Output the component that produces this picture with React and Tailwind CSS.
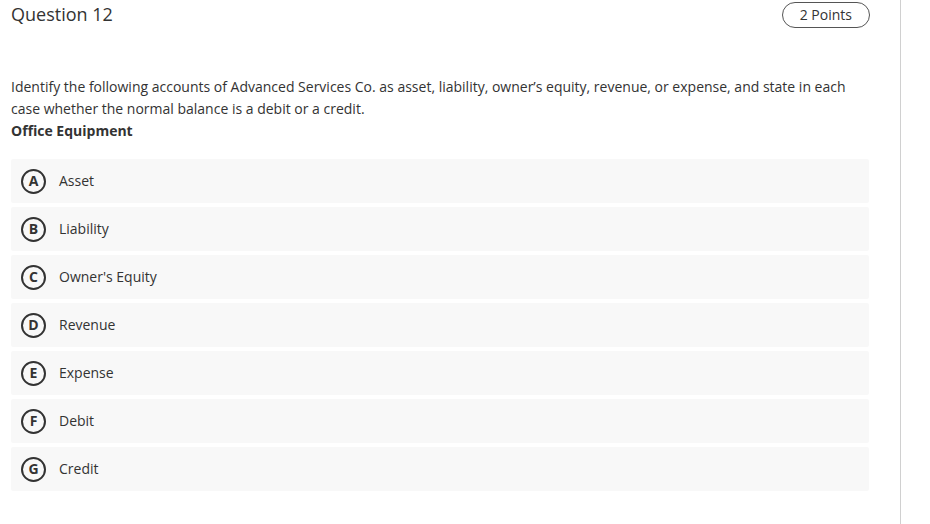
const OPCOES = [
  { letra: 'A', texto: 'Asset' },
  { letra: 'B', texto: 'Liability' },
  { letra: 'C', texto: "Owner's Equity" },
  { letra: 'D', texto: 'Revenue' },
  { letra: 'E', texto: 'Expense' },
  { letra: 'F', texto: 'Debit' },
  { letra: 'G', texto: 'Credit' },
];

export default function App() {
  return (
    <div className="w-[930px] h-[524px] bg-white overflow-hidden" style={{ fontFamily: '"Open Sans", sans-serif' }}>
      <div className="w-[901px] h-full border-r border-[#d0d0d0] pl-[11px] pr-[31px] pt-[1px]">

        {/* ── Cabeçalho ── */}
        <div className="flex items-center justify-between h-[27px]">
          <h2 className="text-[18px] font-medium text-[#333] leading-none mt-[-2px]">Question 12</h2>
          <span className="h-[26px] px-[17px] mr-[-1px] flex items-center rounded-full border border-[#555] text-[14px] font-medium text-[#333]">
            2 Points
          </span>
        </div>

        {/* ── Enunciado ── */}
        <div className="mt-[48px] text-[14px] leading-[22px] text-[#333]">
          <p>
            Identify the following accounts of Advanced Services Co. as asset, liability, owner’s equity, revenue, or expense, and state in each case whether the normal balance is a debit or a credit.
          </p>
          <p className="font-bold">Office Equipment</p>
        </div>

        {/* ── Alternativas ── */}
        <div className="mt-[17px] flex flex-col gap-[4px]">
          {OPCOES.map(op => (
            <div key={op.letra} className="h-[44px] bg-[#f8f8f8] rounded-[2px] flex items-center pl-[10px]">
              <span className="w-[25px] h-[25px] shrink-0 rounded-full border-2 border-[#333] flex items-center justify-center text-[14px] font-bold text-[#333] leading-none">
                {op.letra}
              </span>
              <span className="ml-[13px] text-[14px] font-medium text-[#333] mt-[-2px]">{op.texto}</span>
            </div>
          ))}
        </div>
      </div>
    </div>
  );
}
